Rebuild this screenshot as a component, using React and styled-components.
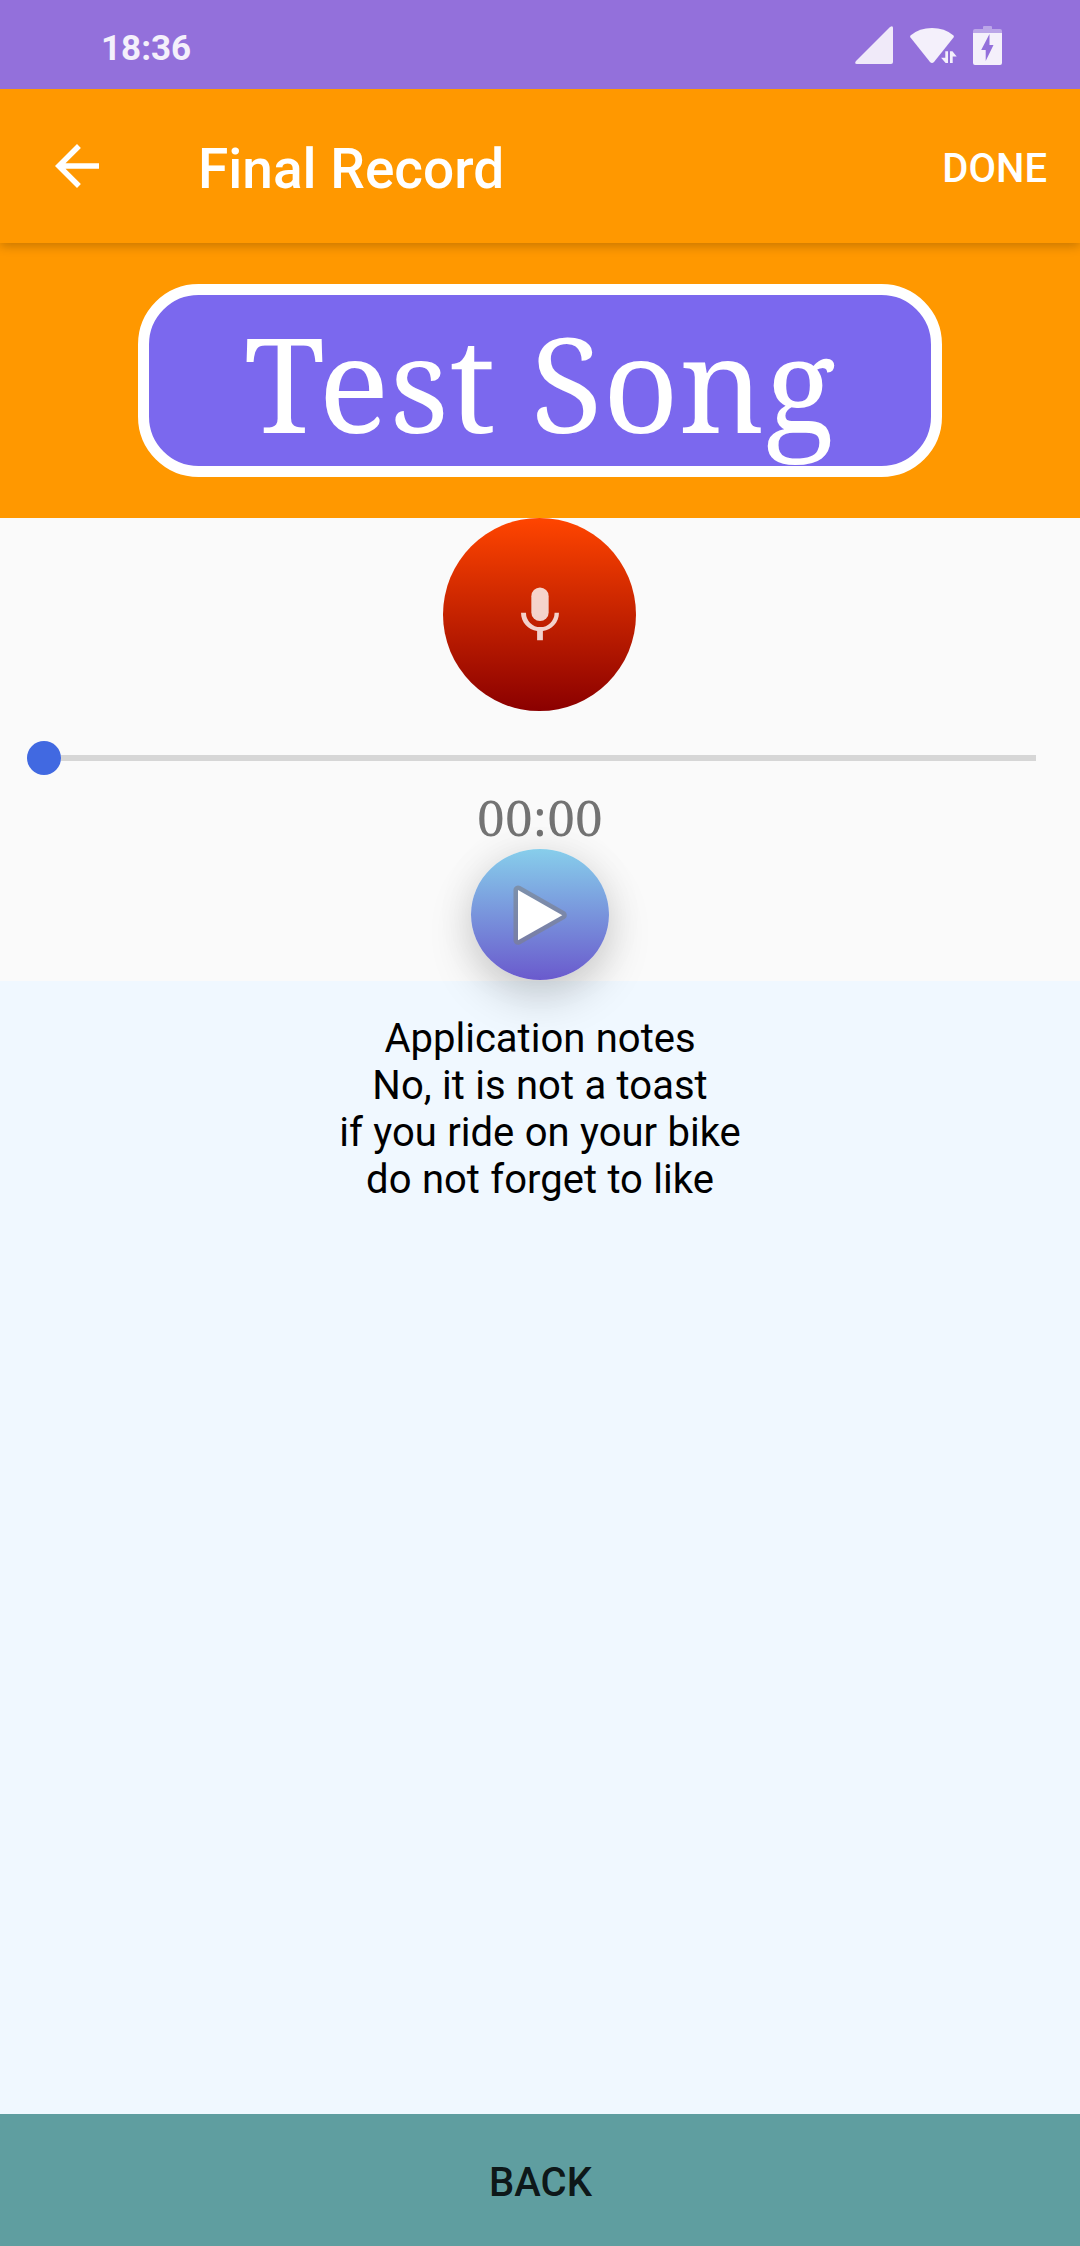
import React from "react";
import styled, { createGlobalStyle } from "styled-components";

const GlobalStyle = createGlobalStyle`
  * { box-sizing: border-box; }
  body { margin: 0; background: #fafafa; }
  button { border: 0; padding: 0; background: none; font: inherit; color: inherit; }
`;

const Screen = styled.div`
  width: 1080px;
  height: 2246px;
  display: flex;
  flex-direction: column;
  overflow: hidden;
  background: #fafafa;
  font-family: Roboto, "Liberation Sans", sans-serif;
`;

const StatusBar = styled.div`
  height: 89px;
  flex: none;
  display: flex;
  justify-content: space-between;
  padding: 26px 78px 0 101px;
  background: #9370db;
  z-index: 2;
`;

const Clock = styled.span`
  margin-top: 1px;
  font-size: 35px;
  line-height: 44px;
  font-weight: 700;
  color: #f4f0fb;
`;

const StatusIcons = styled.div`
  display: flex;
  align-items: flex-start;
`;

const StatusIcon = styled.svg`
  display: block;
  width: ${(p) => p.$width}px;
  height: 40px;
  margin-left: ${(p) => p.$gap || 0}px;
  fill: #f4f0fb;
`;

const AppBar = styled.header`
  height: 154px;
  flex: none;
  display: flex;
  align-items: center;
  padding: 0 33px 0 44px;
  background: #ff9800;
  box-shadow: 0 3px 10px rgba(0, 0, 0, 0.22);
  z-index: 1;
  color: #fff;
`;

const ArrowIcon = styled.svg`
  display: block;
  width: 66px;
  height: 66px;
  fill: #fff;
`;

const Title = styled.h1`
  flex: 1;
  margin: 6px 0 0 88px;
  font-size: 55px;
  line-height: 64px;
  font-weight: 500;
`;

const DoneButton = styled.button`
  margin-top: 6px;
  font-size: 40px;
  line-height: 46px;
  font-weight: 500;
`;

const Banner = styled.section`
  height: 275px;
  flex: none;
  display: flex;
  justify-content: center;
  padding-top: 41px;
  background: #ff9800;
`;

const SongName = styled.div`
  width: 804px;
  height: 193px;
  display: flex;
  justify-content: center;
  border: 11px solid #fff;
  border-radius: 60.5px;
  background: #7b68ee;
  color: #fff;
  font-family: "Noto Serif", "DejaVu Serif", serif;
  font-size: 132px;
  line-height: 174px;
  letter-spacing: 0.3px;
  white-space: nowrap;
`;

const Recorder = styled.section`
  height: 463px;
  flex: none;
  display: flex;
  flex-direction: column;
  align-items: center;
`;

const RecordButton = styled.button`
  width: 193px;
  height: 193px;
  flex: none;
  margin-right: 1px;
  display: grid;
  place-items: center;
  border-radius: 50%;
  background: linear-gradient(#ff4500, #8b0000);
`;

const MicIcon = styled.svg`
  display: block;
  width: 66px;
  height: 66px;
  margin-left: 1px;
  fill: rgba(255, 255, 255, 0.8);
`;

const Slider = styled.div`
  height: 34px;
  flex: none;
  align-self: stretch;
  display: flex;
  align-items: center;
  margin: 30px 44px 0 27px;
`;

const Thumb = styled.div`
  width: 34px;
  height: 34px;
  border-radius: 50%;
  background: #4169e1;
`;

const Track = styled.div`
  flex: 1;
  height: 6px;
  background: #d6d6d6;
`;

const Time = styled.div`
  height: 74px;
  flex: none;
  color: #737373;
  font-family: "Noto Serif", "DejaVu Serif", serif;
  font-size: 49.5px;
  line-height: 84px;
  letter-spacing: 0.2px;
`;

const PlayButton = styled.button`
  width: 138px;
  height: 131px;
  flex: none;
  display: grid;
  place-items: center;
  border-radius: 50%;
  background: linear-gradient(#87ceeb, #6a5acd);
  box-shadow: 0 18px 44px rgba(0, 0, 0, 0.17), 0 0 40px rgba(0, 0, 0, 0.07);
  z-index: 1;
`;

const PlayIcon = styled.svg`
  display: block;
  width: 66px;
  height: 66px;
`;

const Notes = styled.main`
  flex: 1;
  padding-top: 34px;
  background: #f0f8ff;
  color: #000;
  text-align: center;
  font-size: 40px;
  line-height: 47px;
  word-spacing: 0.5px;
`;

const NoteLine = styled.div`
  position: relative;
  z-index: 2;
`;

const BackButton = styled.button`
  height: 132px;
  flex: none;
  padding: 5px 0 0 1px;
  background: #5f9ea0;
  color: rgba(0, 0, 0, 0.87);
  font-size: 40px;
  font-weight: 500;
`;

const notes = [
  "Application notes",
  "No, it is not a toast",
  "if you ride on your bike",
  "do not forget to like",
];

export default function App() {
  return (
    <>
      <GlobalStyle />
      <Screen>
        <StatusBar>
          <Clock>18:36</Clock>
          <StatusIcons>
            <StatusIcon $width={38} viewBox="0 0 38 40">
              <path opacity=".95" d="M38 2v34q0 2-2 2H2q-3 0-1-3L35 1q3-2 3 1Z" />
            </StatusIcon>
            <StatusIcon $width={47} $gap={17} viewBox="0 0 47 40">
              <path d="M.8 9.2Q9.5 2 22 2t21.200 7.200q1.200 1 .3 2.300L24 36q-2 2-4 0L.5 11.500q-.9-1.300.3-2.300Z" />
              <path d="M35.300 25.200h2.700V37h-2.400l-4.500-5.200h4.200V25.200ZM40 25.200h2.400l4.300 5.300h-4V37H40Z" />
            </StatusIcon>
            <StatusIcon $width={29} $gap={16} viewBox="0 0 29 40">
              <path opacity=".42" d="M10 0h8q1 0 1 1v2h8q2 0 2 2v2H0V5q0-2 2-2h8V1q0-1 1-1Z" />
              <path
                fillRule="evenodd"
                d="M0 7h29v30q0 2-2 2H2q-2 0-2-2ZM16.500 8 8.200 24h4.500v11L20.500 19h-4Z"
              />
            </StatusIcon>
          </StatusIcons>
        </StatusBar>

        <AppBar>
          <ArrowIcon viewBox="0 0 24 24">
            <path d="M20 11H7.830l5.590-5.590L12 4l-8 8 8 8 1.410-1.410L7.830 13H20v-2z" />
          </ArrowIcon>
          <Title>Final Record</Title>
          <DoneButton>DONE</DoneButton>
        </AppBar>

        <Banner>
          <SongName>Test Song</SongName>
        </Banner>

        <Recorder>
          <RecordButton aria-label="Record">
            <MicIcon viewBox="0 0 24 24">
              <path d="M12 14.200a3.150 3.150 0 0 0 3.150-3.150v-5.900a3.150 3.150 0 0 0-6.300 0v5.900A3.150 3.150 0 0 0 12 14.200Z" />
              <path d="M17.300 11.200a5.150 5.150 0 0 1-10.400 0H5.100c0 3.500 2.600 6.200 5.850 6.650v3.350h2.100v-3.350c3.250-.45 5.850-3.150 5.850-6.650Z" />
            </MicIcon>
          </RecordButton>
          <Slider>
            <Thumb />
            <Track />
          </Slider>
          <Time>00:00</Time>
          <PlayButton aria-label="Play">
            <PlayIcon viewBox="0 0 66 66">
              <path
                d="M11 8v50.300L55.300 33.200Z"
                fill="none"
                stroke="#7c8089"
                strokeOpacity=".62"
                strokeWidth="9"
                strokeLinejoin="round"
              />
              <path d="M11 8v50.300L55.300 33.200Z" fill="#fff" />
            </PlayIcon>
          </PlayButton>
        </Recorder>

        <Notes>
          {notes.map((line) => (
            <NoteLine key={line}>{line}</NoteLine>
          ))}
        </Notes>
        <BackButton>BACK</BackButton>
      </Screen>
    </>
  );
}
